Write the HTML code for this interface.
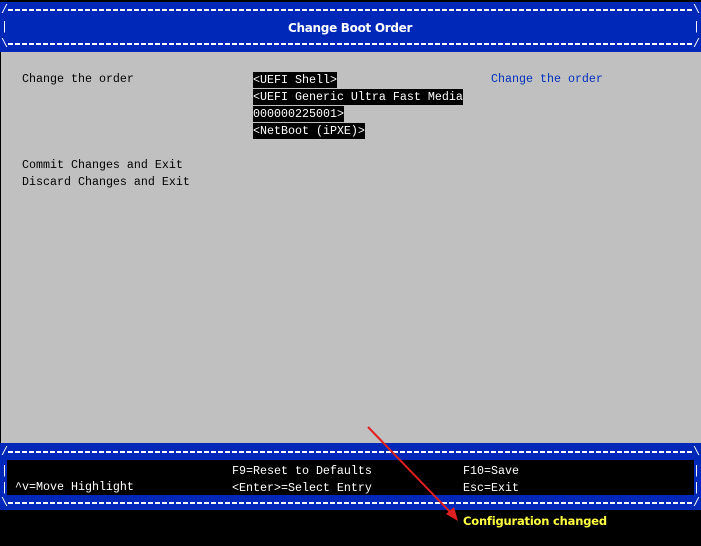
<!DOCTYPE html>
<html><head><style>
body{margin:0;width:701px;height:546px;background:#000;position:relative;overflow:hidden;font-family:"Liberation Mono",monospace;font-size:11.67px;}
.a{position:absolute;white-space:pre;line-height:14px}
.blue{position:absolute;background:#0028b8;left:0;width:701px}
.dash{position:absolute;height:2px;background:repeating-linear-gradient(90deg,#fff 0 5px,transparent 5px 7px)}
.w{color:#fff}.k{color:#000}
.sel{background:#000;color:#fff;padding:1px 0}
</style></head><body>
<div class="blue" style="top:2px;height:50px"></div>
<div class="dash" style="left:8px;right:8px;top:9px"></div>
<div class="dash" style="left:8px;right:8px;top:43px"></div>
<div class="a w" style="left:1px;top:3px">/</div>
<div class="a w" style="left:1px;top:20px">|</div>
<div class="a w" style="left:1px;top:37px">\</div>
<div class="a w" style="left:693px;top:3px">\</div>
<div class="a w" style="left:693px;top:20px">|</div>
<div class="a w" style="left:693px;top:37px">/</div>
<div class="a w" style="left:288px;top:21px;font-family:'DejaVu Sans',sans-serif;font-size:12px;font-weight:bold;letter-spacing:-0.3px">Change Boot Order</div>
<div style="position:absolute;left:1px;top:52px;width:700px;height:391px;background:#c0c0c0"></div>
<div class="a k" style="left:22px;top:72px">Change the order</div>
<div class="a" style="left:253px;top:72px;line-height:17px"><span class="sel">&lt;UEFI Shell&gt;</span>
<span class="sel">&lt;UEFI Generic Ultra Fast Media</span>
<span class="sel">000000225001&gt;</span>
<span class="sel">&lt;NetBoot (iPXE)&gt;</span></div>
<div class="a" style="left:491px;top:72px;color:#0030c0">Change the order</div>
<div class="a k" style="left:22px;top:157px;line-height:17px">Commit Changes and Exit
Discard Changes and Exit</div>
<div class="blue" style="top:443px;height:67px"></div>
<div class="dash" style="left:8px;right:8px;top:451px"></div>
<div class="dash" style="left:8px;right:8px;top:502px"></div>
<div style="position:absolute;left:7px;top:460px;width:687px;height:35px;background:#000"></div>
<div class="a w" style="left:1px;top:445px">/</div>
<div class="a w" style="left:1px;top:463px;line-height:17px">|
|</div>
<div class="a w" style="left:1px;top:496px">\</div>
<div class="a w" style="left:693px;top:445px">\</div>
<div class="a w" style="left:693px;top:463px;line-height:17px">|
|</div>
<div class="a w" style="left:693px;top:496px">/</div>
<div class="a w" style="left:15px;top:480px">^v=Move Highlight</div>
<div class="a w" style="left:232px;top:463px;line-height:17px">F9=Reset to Defaults
&lt;Enter&gt;=Select Entry</div>
<div class="a w" style="left:463px;top:463px;line-height:17px">F10=Save
Esc=Exit</div>
<svg style="position:absolute;left:0;top:0" width="701" height="546"><line x1="368" y1="427" x2="452" y2="514" stroke="#e02020" stroke-width="2"/><polygon points="458,521 446,514 454,507" fill="#e02020"/></svg>
<div class="a" style="left:463px;top:514px;color:#ffff40;font-weight:bold;font-family:'DejaVu Sans',sans-serif;font-size:11.5px;letter-spacing:-0.2px">Configuration changed</div>
</body></html>
